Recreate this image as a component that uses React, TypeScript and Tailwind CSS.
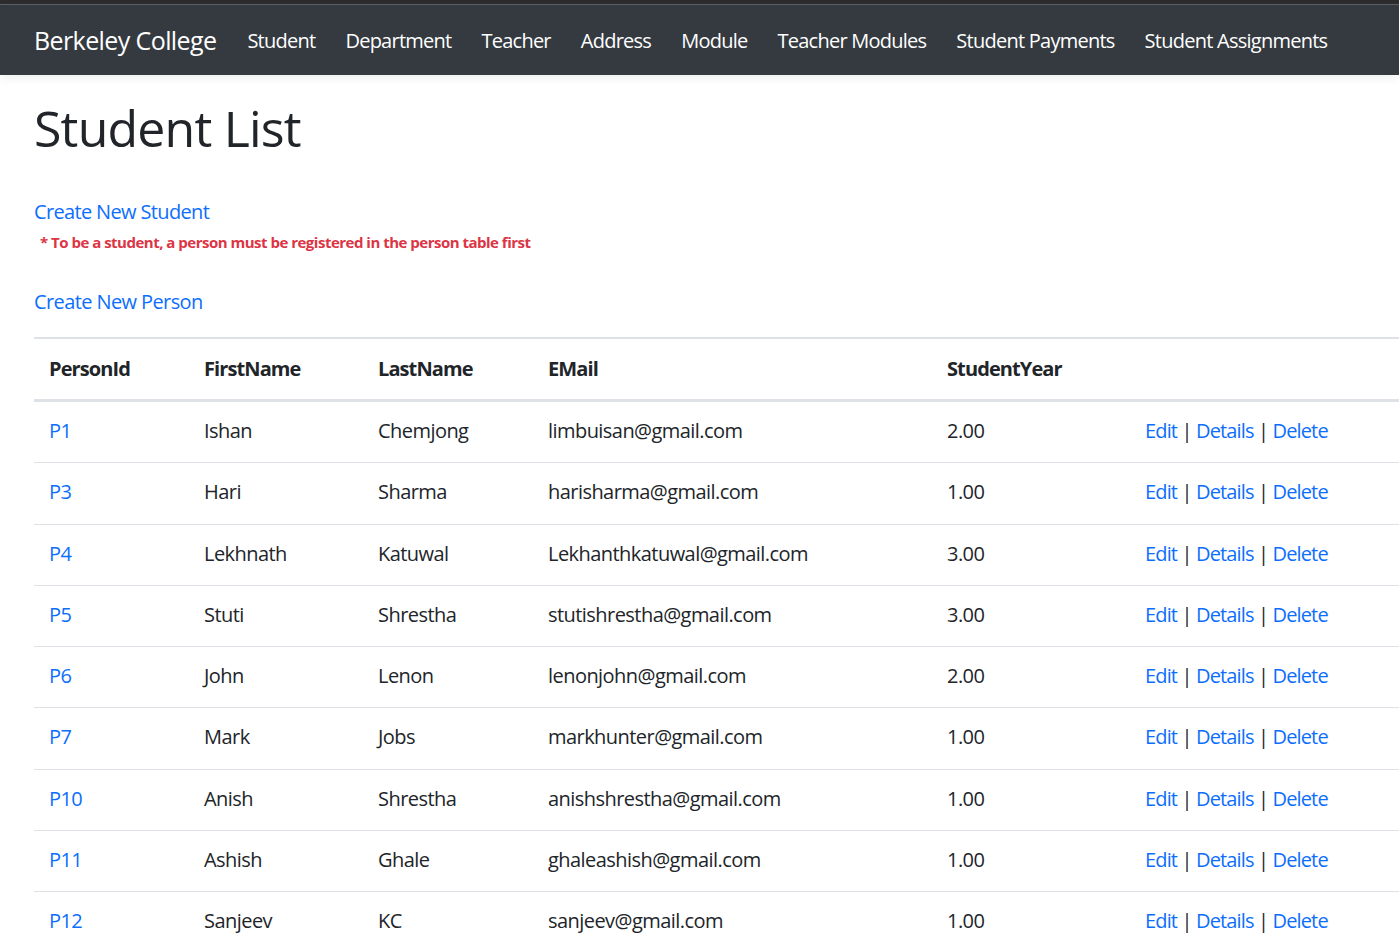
import React from "react";

interface Student {
    id: string;
    firstName: string;
    lastName: string;
    email: string;
    year: string;
}

const students: Student[] = [
    { id: "P1", firstName: "Ishan", lastName: "Chemjong", email: "limbuisan@gmail.com", year: "2.00" },
    { id: "P3", firstName: "Hari", lastName: "Sharma", email: "harisharma@gmail.com", year: "1.00" },
    { id: "P4", firstName: "Lekhnath", lastName: "Katuwal", email: "Lekhanthkatuwal@gmail.com", year: "3.00" },
    { id: "P5", firstName: "Stuti", lastName: "Shrestha", email: "stutishrestha@gmail.com", year: "3.00" },
    { id: "P6", firstName: "John", lastName: "Lenon", email: "lenonjohn@gmail.com", year: "2.00" },
    { id: "P7", firstName: "Mark", lastName: "Jobs", email: "markhunter@gmail.com", year: "1.00" },
    { id: "P10", firstName: "Anish", lastName: "Shrestha", email: "anishshrestha@gmail.com", year: "1.00" },
    { id: "P11", firstName: "Ashish", lastName: "Ghale", email: "ghaleashish@gmail.com", year: "1.00" },
    { id: "P12", firstName: "Sanjeev", lastName: "KC", email: "sanjeev@gmail.com", year: "1.00" },
];

const navLinks = [
    "Student",
    "Department",
    "Teacher",
    "Address",
    "Module",
    "Teacher Modules",
    "Student Payments",
    "Student Assignments",
];

const font = "font-['Segoe_UI','Open_Sans',sans-serif]";

const App: React.FC = () => {
    return (
        <div className={`min-h-screen bg-white text-[#212529] overflow-hidden ${font}`}>
            {/* Navbar */}
            <div className="border-t-4 border-[#2d2d2d]">
                <div className="border-t border-[#5e6166]" />
                <nav className="h-[70px] bg-[#343a40] flex items-center pl-[34px] pt-[2px] shadow-[0_3px_10px_rgba(0,0,0,0.07)]">
                    <a className="text-[25px] text-white mr-[16px] tracking-[-0.6px]">Berkeley College</a>
                    <ul className="flex items-center">
                        {navLinks.map((link) => (
                            <li key={link}>
                                <a className="block px-[15px] text-[20px] text-white tracking-[-0.75px]">{link}</a>
                            </li>
                        ))}
                    </ul>
                </nav>
            </div>

            {/* Content */}
            <main className="pl-[34px]">
                <h1 className="mt-[23px] text-[50px] leading-[60px] font-medium tracking-[-0.8px]">
                    Student List
                </h1>

                <a className="block mt-[39px] text-[20px] leading-[30px] text-[#0d6efd] tracking-[-0.65px]">
                    Create New Student
                </a>
                <p className="mt-[4px] ml-[6px] text-[15px] leading-[22px] font-bold text-[#dc3545] tracking-[-0.5px]">
                    * To be a student, a person must be registered in the person table first
                </p>
                <a className="block mt-[34px] text-[20px] leading-[30px] text-[#0d6efd] tracking-[-0.6px]">
                    Create New Person
                </a>

                <table className="mt-[20px] w-[1440px] table-fixed border-collapse text-[20px] tracking-[-0.55px]">
                    <colgroup>
                        <col className="w-[155px]" />
                        <col className="w-[174px]" />
                        <col className="w-[170px]" />
                        <col className="w-[399px]" />
                        <col className="w-[198px]" />
                        <col />
                    </colgroup>
                    <thead>
                        <tr className="border-t-2 border-b-[3px] border-[#dee2e6] tracking-[-0.9px]">
                            <th className="px-[15px] py-[15px] leading-[30px] text-left font-bold">PersonId</th>
                            <th className="px-[15px] py-[15px] leading-[30px] text-left font-bold">FirstName</th>
                            <th className="px-[15px] py-[15px] leading-[30px] text-left font-bold">LastName</th>
                            <th className="px-[15px] py-[15px] leading-[30px] text-left font-bold">EMail</th>
                            <th className="px-[15px] py-[15px] leading-[30px] text-left font-bold">StudentYear</th>
                            <th className="px-[15px] py-[15px]" />
                        </tr>
                    </thead>
                    <tbody>
                        {students.map((s) => (
                            <tr key={s.id} className="h-[61.25px] border-t border-[#dee2e6] first:border-t-0">
                                <td className="px-[15px] pt-[14px] pb-[16.25px] leading-[30px] text-[#0d6efd]">{s.id}</td>
                                <td className="px-[15px] pt-[14px] pb-[16.25px] leading-[30px]">{s.firstName}</td>
                                <td className="px-[15px] pt-[14px] pb-[16.25px] leading-[30px]">{s.lastName}</td>
                                <td className="px-[15px] pt-[14px] pb-[16.25px] leading-[30px]">{s.email}</td>
                                <td className="px-[15px] pt-[14px] pb-[16.25px] leading-[30px]">{s.year}</td>
                                <td className="px-[15px] pt-[14px] pb-[16.25px] leading-[30px] whitespace-nowrap tracking-[-0.85px]">
                                    <a className="text-[#0d6efd]">Edit</a> | <a className="text-[#0d6efd]">Details</a> |{" "}
                                    <a className="text-[#0d6efd]">Delete</a>
                                </td>
                            </tr>
                        ))}
                    </tbody>
                </table>
            </main>
        </div>
    );
};

export default App;
